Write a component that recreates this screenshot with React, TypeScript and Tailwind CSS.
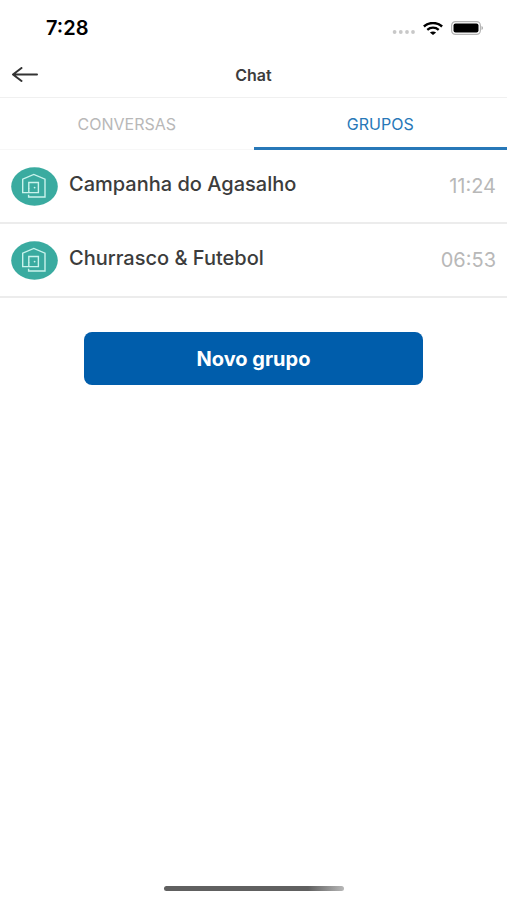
import React from "react";

type Group = { name: string; time: string };

const groups: Group[] = [
  { name: "Campanha do Agasalho", time: "11:24" },
  { name: "Churrasco & Futebol", time: "06:53" },
];

function StatusBar() {
  return (
    <div className="flex h-[52px] items-center justify-between pt-1 pr-6 pl-[46px]">
      <span className="text-xl leading-6 font-semibold text-black">7:28</span>
      <div className="flex items-center gap-2">
        <svg className="mt-2 h-1 w-[23px]" viewBox="0 0 23 4" fill="#c8c8c8" aria-hidden="true">
          <circle cx="2.6" cy="2" r="1.9" />
          <circle cx="8.8" cy="2" r="1.9" />
          <circle cx="15" cy="2" r="1.9" />
          <circle cx="21" cy="2" r="1.9" />
        </svg>
        <svg className="h-[13px] w-5" viewBox="0 0 20 13" fill="none" stroke="#000" aria-hidden="true">
          <path d="M0.9 4.5C6 -0.1 14 -0.1 19.1 4.5" strokeWidth="2.5" />
          <path d="M4.3 7.8C7.5 5 12.5 5 15.7 7.8" strokeWidth="2.3" />
          <path d="M10 13L6.9 10.6C8.6 9 11.4 9 13.1 10.6Z" fill="#000" stroke="none" />
        </svg>
        <svg className="h-[14px] w-8" viewBox="0 0 32 14" aria-hidden="true">
          <rect x="0.6" y="0.6" width="28.8" height="12.8" rx="3.8" fill="#fff" stroke="#b5b5b5" strokeWidth="1.2" />
          <rect x="2.5" y="2.4" width="25" height="9.2" rx="2" fill="#000" />
          <path d="M30.5 5Q32 5.6 32 7T30.5 9Z" fill="#aaa" />
        </svg>
      </div>
    </div>
  );
}

function Avatar() {
  return (
    <svg className="h-[39px] w-[47px] shrink-0" viewBox="0 0 47 39" fill="none" aria-hidden="true">
      <ellipse cx="23.5" cy="19.5" rx="23.3" ry="19.2" fill="#3aaba0" />
      <g stroke="#c9f3ec" strokeWidth="1.4">
        <path d="M17.8 21.5V15.5H27.4V25.6H11.7V12.1L22.8 7.4L34 12.1V30H17.6V27.8" />
        <path d="M17.8 21V25.6" />
      </g>
      <circle cx="23.6" cy="20.6" r="0.9" fill="#c9f3ec" />
    </svg>
  );
}

export default function App() {
  return (
    <div className="flex min-h-screen flex-col bg-white font-['Inter','Liberation_Sans',sans-serif]">
      <StatusBar />
      <header className="grid h-[46px] grid-cols-[1fr_auto_1fr] items-center border-b border-[#f0f0f0] px-3">
        <button type="button" aria-label="Voltar" className="justify-self-start">
          <svg className="h-4 w-[26px]" viewBox="0 0 26 16" fill="none" stroke="#333" strokeWidth="2" strokeLinecap="round" strokeLinejoin="round">
            <path d="M25 7.5H1M9.5 1L1 7.5L9.5 14" />
          </svg>
        </button>
        <h1 className="text-base leading-6 font-semibold text-[#3c3c3c]">Chat</h1>
      </header>

      <nav role="tablist" className="grid h-[52px] grid-cols-2 text-base">
        <button type="button" role="tab" aria-selected="false" className="border-b border-[#f7f7f7] text-[#b8b8b8]">
          CONVERSAS
        </button>
        <button type="button" role="tab" aria-selected="true" className="border-b-3 border-[#2878b8] pt-0.5 text-[#2878b8]">
          GRUPOS
        </button>
      </nav>

      <main>
        <ul>
          {groups.map((g) => (
            <li key={g.name} className="border-b-2 border-[#ececec]">
              <a href="#" className="flex h-[72px] items-center gap-[11px] px-[11px]">
                <Avatar />
                <span className="mb-1 flex-1 text-xl leading-6 font-medium text-[#3c3c3c]">{g.name}</span>
                <time className="text-xl leading-6 text-[#b8b8b8]">{g.time}</time>
              </a>
            </li>
          ))}
        </ul>
        <div className="px-[84px] pt-[34px]">
          <button type="button" className="h-[53px] w-full rounded-lg bg-[#005dab] text-xl font-bold text-white">
            Novo grupo
          </button>
        </div>
      </main>

      <div className="mt-auto flex justify-center pb-[9px]">
        <div className="h-[5px] w-[180px] rounded-full bg-linear-to-r from-[#606060] from-80% to-[#b8b8b8]" />
      </div>
    </div>
  );
}
